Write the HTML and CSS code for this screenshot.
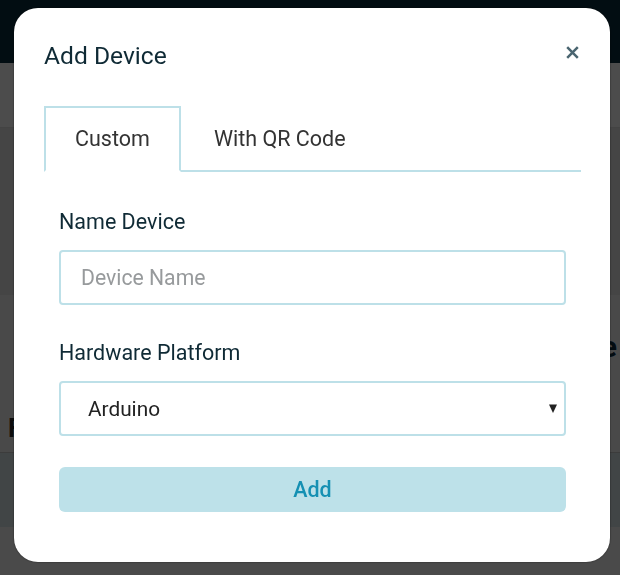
FILE: index.html
```html
<!DOCTYPE html>
<html lang="en">
<head>
<meta charset="utf-8">
<title>Add Device</title>
<link rel="stylesheet" href="styles.css">
</head>
<body>
<div class="page">
  <header class="bg-header"></header>
  <div class="bg-toolbar"></div>
  <div class="bg-band"></div>
  <section class="bg-section">
    <h2 class="bg-title-right">My Device</h2>
    <h3 class="bg-title-left">Features</h3>
  </section>
  <div class="bg-row"></div>
  <div class="bg-rest"></div>
</div>

<div class="overlay">
  <div class="modal" role="dialog" aria-labelledby="modal-title">
    <div class="modal-header">
      <h1 class="modal-title" id="modal-title">Add Device</h1>
      <button class="close" type="button" aria-label="Close">
        <svg width="13" height="13" viewBox="0 0 13 13" aria-hidden="true">
          <path d="M1.2 1.2 L11.8 11.8 M11.8 1.2 L1.2 11.8" stroke="#4a6570" stroke-width="2.5" fill="none"/>
        </svg>
      </button>
    </div>

    <ul class="tabs">
      <li class="tab active">Custom</li>
      <li class="tab">With QR Code</li>
    </ul>

    <form class="tab-content">
      <div class="form-group">
        <label class="label" for="dev-name">Name Device</label>
        <input class="field" id="dev-name" type="text" placeholder="Device Name">
      </div>
      <div class="form-group last">
        <label class="label" for="platform">Hardware Platform</label>
        <div class="select-wrap">
          <select class="field select" id="platform">
            <option>Arduino</option>
            <option>ESP8266</option>
            <option>Raspberry Pi</option>
          </select>
          <svg class="caret" width="8" height="9" viewBox="0 0 8 9" aria-hidden="true">
            <polygon points="0,0.5 8,0.5 4,9" fill="#222"/>
          </svg>
        </div>
      </div>
      <button class="btn-add" type="button">Add</button>
    </form>
  </div>
</div>
</body>
</html>
```

FILE: styles.css
```css
* { box-sizing: border-box; }

html, body {
  margin: 0;
  padding: 0;
}

body {
  font-family: Roboto, "Liberation Sans", Arial, sans-serif;
  background: #f7f7f7;
  width: 620px;
  height: 575px;
  overflow: hidden;
}

/* ---------- background page ---------- */
.page {
  display: flex;
  flex-direction: column;
}

.bg-header {
  height: 63px;
  background: #082c3d;
}

.bg-toolbar {
  height: 65px;
  background: #ffffff;
  border-bottom: 1px solid #e2e2e2;
}

.bg-band {
  height: 167px;
  background: #e8e8e8;
}

.bg-section {
  height: 157px;
  background: #f6f6f6;
  display: flex;
  flex-direction: column;
  padding-top: 34px;
}

.bg-title-right {
  margin: 0;
  align-self: flex-end;
  padding-right: 3px;
  font-size: 30px;
  line-height: 36px;
  font-weight: 700;
  color: #0b2a3a;
}

.bg-title-left {
  margin: 48px 0 0;
  padding-left: 8px;
  font-size: 26px;
  line-height: 30px;
  font-weight: 700;
  color: #2a2a2a;
}

.bg-row {
  height: 75px;
  background: #dbe6eb;
  border-top: 1px solid #c9c9c9;
}

.bg-rest {
  height: 48px;
  background: #f7f7f7;
}

/* ---------- overlay + modal ---------- */
.overlay {
  position: fixed;
  inset: 0;
  background: rgba(0, 0, 0, 0.7);
  display: flex;
  align-items: flex-start;
  padding: 8px 0 0 14px;
}

.modal {
  width: 596px;
  background: #ffffff;
  border-radius: 24px;
  padding: 33px 29px 50px 30px;
  box-shadow: 0 0 2px rgba(0, 0, 0, 0.6);
}

.modal-header {
  display: flex;
  justify-content: space-between;
  align-items: flex-start;
}

.modal-title {
  margin: 0;
  font-size: 24.6px;
  line-height: 30px;
  font-weight: 400;
  color: #0f2a35;
}

.close {
  border: 0;
  background: transparent;
  padding: 0;
  margin: 5px 2px 0 0;
  width: 13px;
  height: 13px;
  display: flex;
  cursor: pointer;
}

/* ---------- tabs ---------- */
.tabs {
  list-style: none;
  margin: 35px 0 0;
  padding: 0;
  display: flex;
  border-bottom: 2px solid #bde0e8;
}

.tab {
  padding: 18px 29px;
  font-size: 21.5px;
  line-height: 26px;
  color: #333333;
  border: 2px solid transparent;
  margin-bottom: -2px;
  margin-right: 2px;
}

.tab.active {
  border-color: #bde0e8 #bde0e8 #ffffff;
  background: #ffffff;
}

/* ---------- form ---------- */
.tab-content {
  padding: 37px 15px 0;
  display: flex;
  flex-direction: column;
}

.form-group {
  display: flex;
  flex-direction: column;
  margin-bottom: 35px;
}

.form-group.last {
  margin-bottom: 31px;
}

.label {
  font-size: 21.5px;
  line-height: 26px;
  color: #0f2a35;
  margin-bottom: 15px;
}

.field {
  height: 55px;
  width: 100%;
  border: 2px solid #bde0e8;
  border-radius: 4px;
  padding: 0 20px;
  font-family: Roboto, "Liberation Sans", Arial, sans-serif;
  font-size: 21.2px;
  color: #222222;
  background: #ffffff;
  outline: none;
}

.field::placeholder {
  color: #979a9c;
}

.select-wrap {
  position: relative;
}

.select {
  -webkit-appearance: none;
  appearance: none;
  font-size: 20.8px;
  padding-left: 27px;
  padding-right: 30px;
}

.caret {
  position: absolute;
  right: 9px;
  top: 23px;
  pointer-events: none;
}

.btn-add {
  height: 45px;
  width: 100%;
  border: 0;
  border-radius: 6px;
  background: #bde1e9;
  color: #1590b3;
  font-family: Roboto, "Liberation Sans", Arial, sans-serif;
  font-size: 21.5px;
  font-weight: 500;
  cursor: pointer;
}
```
